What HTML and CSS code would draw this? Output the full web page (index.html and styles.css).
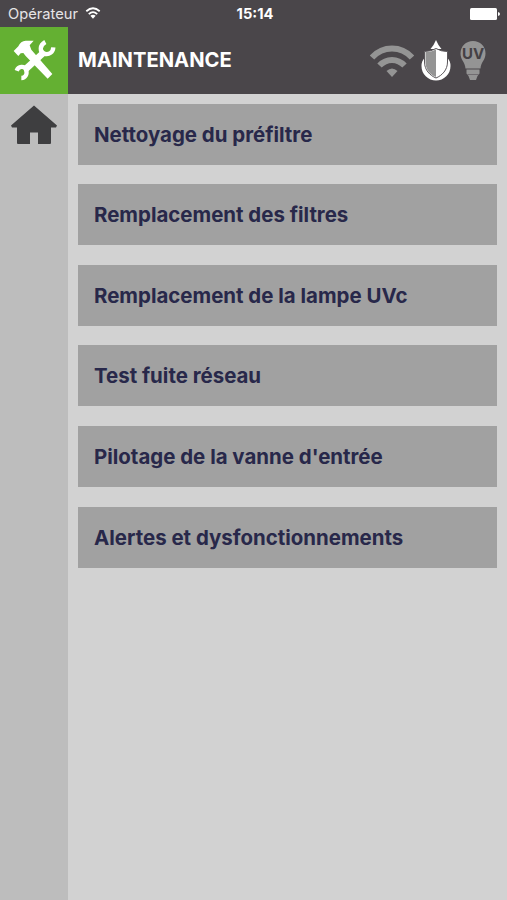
FILE: index.html
```html
<!DOCTYPE html>
<html lang="fr">
<head>
    <meta charset="UTF-8">
    <title>Maintenance</title>
    <link rel="stylesheet" href="styles.css">
</head>
<body>

<!-- status bar -->
<div class="status-bar">
    <div class="carrier">
        <span>Opérateur</span>
        <svg class="signal" viewBox="0 0 44 34">
            <path d="M3 12Q22-5 41 12M10 20Q22 9 34 20" fill="none" stroke="#fff" stroke-width="5"/>
            <path d="M14.500 25Q22 19 29.500 25L22 33Z" fill="#fff"/>
        </svg>
    </div>
    <div class="time">15:14</div>
    <svg class="battery" viewBox="0 0 30 12">
        <rect width="27" height="12" rx="1.500" fill="#fff"/>
        <path d="M28 4Q30 4.500 30 6T28 8Z" fill="#fff"/>
    </svg>
</div>

<!-- header -->
<header class="header">
    <div class="tools">
        <svg viewBox="0 0 156 156">
            <path d="M50 108L110 53" stroke="#fff" stroke-width="20"/>
            <path d="M112 24C94 34 95 54 108 59C124 64 135 54 136 40M26 110C31 96 49 95 54 107C59 120 52 132 40 132" fill="none" stroke="#fff" stroke-width="13"/>
            <path d="M17 51L31 37Q38 21 53 20H77L65 34L70 47L133 120L119 134L53 66L46 57L38 58L31 66Z" fill="#fff"/>
        </svg>
    </div>
    <h1>MAINTENANCE</h1>
    <div class="indicators">
        <svg class="wifi" viewBox="0 0 44 34">
            <path d="M2 13.500C13 1.500 31 1.500 42 13.500M9.500 21.500C16.500 14 27.500 14 34.500 21.500" fill="none" stroke="#949494" stroke-width="6"/>
            <path d="M16.500 27Q22 22 27.500 27L22 33Z" fill="#949494"/>
        </svg>
        <svg class="filter" viewBox="0 0 30 42">
            <path d="M15 0Q17 5 20.500 9H9.500Q13 5 15 0Z" fill="#fff"/>
            <path d="M3.500 18Q.5 21 .5 26A14.500 14.500 0 0 0 29.500 26Q29.500 21 26.500 18Z" fill="#fff"/>
            <path d="M15 8.500Q20 11.500 26.500 11.500V22C26.500 30 21 35.500 15 38C9 35.500 3.500 30 3.500 22V11.500Q10 11.500 15 8.500Z" fill="#fff" stroke="#5a565a"/>
            <path d="M15 9.500Q10 12 4.500 12V22C4.500 29.500 9 34.500 15 37Z" fill="#949494"/>
        </svg>
        <svg class="lamp" viewBox="0 0 26 40">
            <path d="M5.500 27.500C5 21 .5 19 .5 12.500C.5 5 6 0 13 0S25.500 5 25.500 12.500C25.500 19 21 21 20.500 27.500Z" fill="#949494"/>
            <path d="M6.500 28.500H19.500V32.500L17.500 35L16 39H10L8.500 35L6.500 32.500Z" fill="#949494"/>
            <path d="M7 33.500H19" stroke="#706c70" stroke-width="1"/>
            <text x="13" y="18" text-anchor="middle">UV</text>
        </svg>
    </div>
</header>

<div class="page">
    <nav class="sidebar">
        <svg class="home" viewBox="0 0 48 40">
            <path d="M24 .5L47 20.500L46 22.500H41V38Q41 39 40 39H28V27.500H20V39H8Q7 39 7 38V22.500H2L1 20.500Z" fill="#3e3e40"/>
        </svg>
    </nav>

    <main class="menu">
        <div class="item">Nettoyage du préfiltre</div>
        <div class="item">Remplacement des filtres</div>
        <div class="item">Remplacement de la lampe UVc</div>
        <div class="item">Test fuite réseau</div>
        <div class="item">Pilotage de la vanne d'entrée</div>
        <div class="item">Alertes et dysfonctionnements</div>
    </main>
</div>

</body>
</html>
```
FILE: styles.css
```css
* {
    margin: 0;
    padding: 0;
    box-sizing: border-box;
}

body {
    height: 900px;
    display: flex;
    flex-direction: column;
    overflow: hidden;
    background: #d2d2d2;
    font-family: Inter, "Liberation Sans", sans-serif;
}

svg {
    display: block;
}

/* status bar */
.status-bar {
    height: 27px;
    flex: none;
    display: grid;
    grid-template-columns: 1fr auto 1fr;
    align-items: center;
    padding: 0 7px 0 8px;
    background: #4a464a;
    color: #fff;
}

.carrier {
    display: flex;
    align-items: center;
    gap: 7px;
    font-size: 14.700px;
    color: #e6e4e6;
}

.signal {
    width: 16px;
    height: 12px;
    margin-bottom: 2px;
}

.time {
    padding-left: 2px;
    font-size: 14.700px;
    font-weight: 700;
}

.battery {
    width: 30px;
    height: 12px;
    justify-self: end;
}

/* header */
.header {
    height: 67px;
    flex: none;
    display: flex;
    align-items: center;
    background: #4a464a;
}

.tools {
    width: 68px;
    height: 67px;
    padding: 7px 8px;
    background: #64b032;
}

.tools svg {
    width: 52px;
    height: 52px;
}

.header h1 {
    margin-left: 10px;
    padding-bottom: 2px;
    color: #fff;
    font-size: 20.200px;
    font-weight: 700;
}

.indicators {
    display: flex;
    align-items: center;
    margin-left: auto;
    padding-right: 21px;
}

.wifi {
    width: 44px;
    height: 34px;
    margin-right: 7px;
}

.filter {
    width: 30px;
    height: 42px;
    margin-right: 9px;
}

.lamp {
    width: 26px;
    height: 40px;
}

.lamp text {
    font-size: 15px;
    font-weight: 700;
    fill: #454145;
}

/* content */
.page {
    flex: 1;
    display: flex;
}

.sidebar {
    width: 68px;
    padding: 11px 10px;
    background: #bdbdbd;
}

.home {
    width: 48px;
    height: 40px;
}

.menu {
    flex: 1;
    display: flex;
    flex-direction: column;
    gap: 19.600px;
    padding: 9.700px 10px;
}

.item {
    height: 61px;
    display: flex;
    align-items: center;
    padding-left: 16px;
    background: #a1a1a1;
    color: #28284a;
    font-size: 20.450px;
    font-weight: 700;
}
```
